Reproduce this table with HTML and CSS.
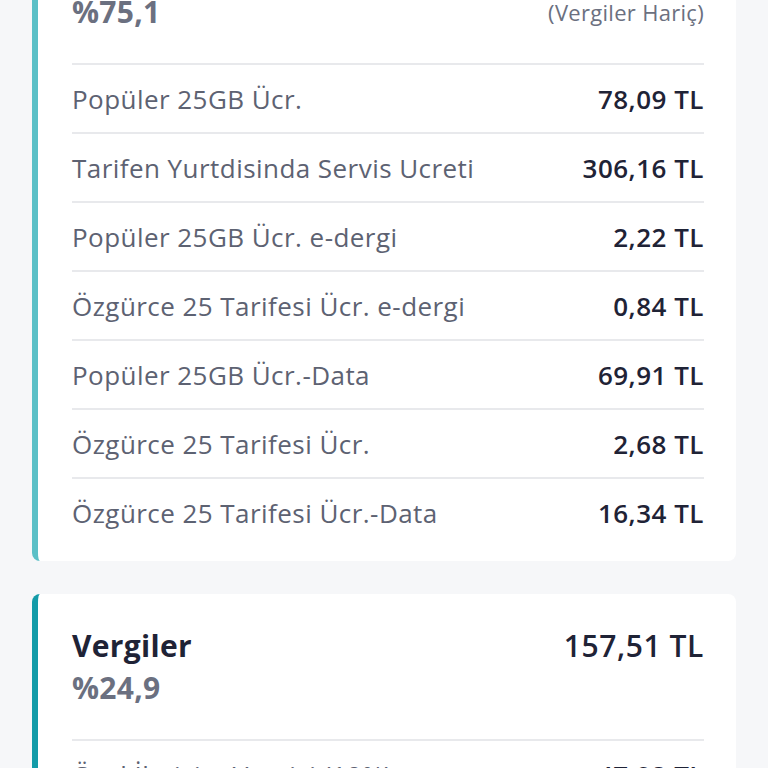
FILE: index.html
```html
<!DOCTYPE html>
<html lang="tr">
<head>
<meta charset="utf-8">
<link rel="stylesheet" href="styles.css">
</head>
<body>
<div class="page">
  <section class="card card-light">
    <div class="head">
      <div class="head-left">
        <div class="title">Ücretler</div>
        <div class="pct">%75,1</div>
      </div>
      <div class="head-right">
        <div class="total">479,24 TL</div>
        <div class="note">(Vergiler Hariç)</div>
      </div>
    </div>
    <div class="row"><span class="label">Popüler 25GB Ücr.</span><span class="amt">78,09 TL</span></div>
    <div class="row"><span class="label">Tarifen Yurtdisinda Servis Ucreti</span><span class="amt">306,16 TL</span></div>
    <div class="row"><span class="label">Popüler 25GB Ücr. e-dergi</span><span class="amt">2,22 TL</span></div>
    <div class="row"><span class="label">Özgürce 25 Tarifesi Ücr. e-dergi</span><span class="amt">0,84 TL</span></div>
    <div class="row"><span class="label">Popüler 25GB Ücr.-Data</span><span class="amt">69,91 TL</span></div>
    <div class="row"><span class="label">Özgürce 25 Tarifesi Ücr.</span><span class="amt">2,68 TL</span></div>
    <div class="row"><span class="label">Özgürce 25 Tarifesi Ücr.-Data</span><span class="amt">16,34 TL</span></div>
  </section>
  <section class="card card-dark">
    <div class="head">
      <div class="head-left">
        <div class="title">Vergiler</div>
        <div class="pct">%24,9</div>
      </div>
      <div class="head-right">
        <div class="total">157,51 TL</div>
      </div>
    </div>
    <div class="row"><span class="label">Özel İletişim Vergisi (10%)</span><span class="amt">47,92 TL</span></div>
    <div class="row"><span class="label">KDV (18%)</span><span class="amt">86,25 TL</span></div>
  </section>
</div>
</body>
</html>
```

FILE: styles.css
```css
html, body {
  margin: 0;
  padding: 0;
  background: #f6f7f9;
}
body {
  font-family: "Open Sans", "Lato", sans-serif;
  overflow: hidden;
  height: 768px;
}
.page {
  margin-top: -82px;
  padding: 0 32px;
  display: flex;
  flex-direction: column;
  gap: 33px;
}
.card {
  background: #ffffff;
  border-left: 6px solid #5bc0c7;
  border-radius: 8px;
  padding: 30px 32px 15px 34px;
}
.card-dark {
  border-left-color: #139ba8;
}
.head {
  display: flex;
  justify-content: space-between;
  align-items: flex-start;
  padding-bottom: 31px;
}
.head-left, .head-right {
  display: flex;
  flex-direction: column;
}
.head-right {
  align-items: flex-end;
}
.title {
  font-size: 30px;
  font-weight: 700;
  color: #1f2336;
  line-height: 44px;
  letter-spacing: 0.3px;
}
.pct {
  font-size: 30px;
  font-weight: 700;
  color: #6b7080;
  line-height: 40px;
  letter-spacing: 0.3px;
}
.total {
  font-size: 30px;
  font-weight: 600;
  color: #1f2336;
  line-height: 44px;
  letter-spacing: 0.6px;
}
.note {
  font-size: 22px;
  color: #6b7080;
  line-height: 40px;
  letter-spacing: 0.3px;
}
.row {
  display: flex;
  justify-content: space-between;
  align-items: center;
  height: 67px;
  border-top: 2px solid #e8e9ec;
}
.label {
  font-size: 26px;
  color: #5d6272;
  letter-spacing: 0.45px;
}
.amt {
  font-size: 26px;
  font-weight: 600;
  color: #1f2336;
  letter-spacing: 0.5px;
}
```
